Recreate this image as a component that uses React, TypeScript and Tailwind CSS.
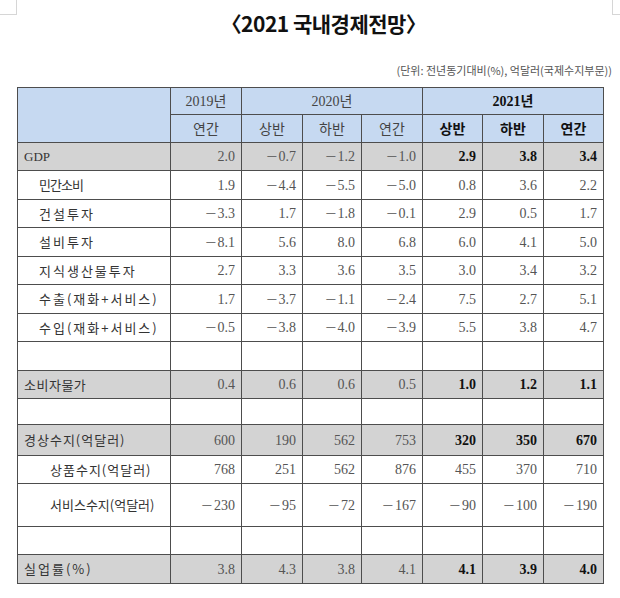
import React from "react";

type Row = {
  label: string;
  indent: 0 | 1 | 2;
  vals: string[];
  shade: boolean;
  track: string;
  serif?: boolean;
  empty?: boolean;
};

const rows: Row[] = [
  { label: "GDP", indent: 0, vals: ["2.0", "−0.7", "−1.2", "−1.0", "2.9", "3.8", "3.4"], shade: true, track: "tracking-[0px]", serif: true },
  { label: "민간소비", indent: 1, vals: ["1.9", "−4.4", "−5.5", "−5.0", "0.8", "3.6", "2.2"], shade: false, track: "tracking-[-1px]" },
  { label: "건설투자", indent: 1, vals: ["−3.3", "1.7", "−1.8", "−0.1", "2.9", "0.5", "1.7"], shade: false, track: "tracking-[2px]" },
  { label: "설비투자", indent: 1, vals: ["−8.1", "5.6", "8.0", "6.8", "6.0", "4.1", "5.0"], shade: false, track: "tracking-[2px]" },
  { label: "지식생산물투자", indent: 1, vals: ["2.7", "3.3", "3.6", "3.5", "3.0", "3.4", "3.2"], shade: false, track: "tracking-[2px]" },
  { label: "수출(재화+서비스)", indent: 1, vals: ["1.7", "−3.7", "−1.1", "−2.4", "7.5", "2.7", "5.1"], shade: false, track: "tracking-[2px]" },
  { label: "수입(재화+서비스)", indent: 1, vals: ["−0.5", "−3.8", "−4.0", "−3.9", "5.5", "3.8", "4.7"], shade: false, track: "tracking-[2px]" },
  { label: "", indent: 0, vals: ["", "", "", "", "", "", ""], shade: false, track: "", empty: true },
  { label: "소비자물가", indent: 0, vals: ["0.4", "0.6", "0.6", "0.5", "1.0", "1.2", "1.1"], shade: true, track: "tracking-[0.5px]" },
  { label: "", indent: 0, vals: ["", "", "", "", "", "", ""], shade: false, track: "", empty: true },
  { label: "경상수지(억달러)", indent: 0, vals: ["600", "190", "562", "753", "320", "350", "670"], shade: true, track: "tracking-[1px]" },
  { label: "상품수지(억달러)", indent: 2, vals: ["768", "251", "562", "876", "455", "370", "710"], shade: false, track: "tracking-[1px]" },
  { label: "서비스수지(억달러)", indent: 2, vals: ["−230", "−95", "−72", "−167", "−90", "−100", "−190"], shade: false, track: "tracking-[0px]" },
  { label: "", indent: 0, vals: ["", "", "", "", "", "", ""], shade: false, track: "", empty: true },
  { label: "실업률(%)", indent: 0, vals: ["3.8", "4.3", "3.8", "4.1", "4.1", "3.9", "4.0"], shade: true, track: "tracking-[2px]" },
];

const serif = "font-['Liberation_Serif','Noto_Sans_CJK_KR',serif]";
const sans = "font-['Noto_Sans_CJK_KR','Noto_Sans',sans-serif]";

function Num({ v }: { v: string }) {
  if (v.startsWith("−")) {
    return (
      <span>
        <span className="inline-block scale-x-[1.4] mr-[3px]">−</span>
        {v.slice(1)}
      </span>
    );
  }
  return <span>{v}</span>;
}

export default function App() {
  const blue = "bg-[#c6d9f1]";
  return (
    <div className="w-[620px] h-[598px] bg-white overflow-hidden">
      <div className="flex items-start h-[62px]">
        <div className="w-[17px] h-[15px] border-r border-b border-[#d6d6d6] shrink-0" />
        <div className="flex-1 flex justify-center pt-[10px] pl-[18px]">
          <div className={`${sans} text-[21px] leading-[26px] font-bold text-[#111] tracking-[-0.5px]`}>
            〈2021 국내경제전망〉
          </div>
        </div>
        <div className="w-[8px] h-[15px] border-l border-b border-[#d6d6d6] shrink-0" />
      </div>
      <div className={`${sans} text-right pr-[8px] text-[11px] leading-[16px] text-[#555]`}>
        (단위: 전년동기대비(%), 억달러(국제수지부문))
      </div>
      <div className="pl-[17px] mt-[9px]">
        <div className="inline-grid bg-[#4d4d4d] gap-px border border-[#4d4d4d] grid-cols-[152px_70px_60px_58px_60px_59px_60px_59px] grid-rows-[26px_27px_27px_28px_27px_28px_27px_28px_27px_28px_27px_25px_30px_27px_42px_27px_28px]">
          <div className={`${blue} row-span-2`} />
          <div className={`${blue} ${serif} flex items-center justify-center text-[14px] text-[#444]`}>2019년</div>
          <div className={`${blue} ${serif} col-span-3 flex items-center justify-center text-[14px] text-[#444]`}>2020년</div>
          <div className={`${blue} ${serif} col-span-3 flex items-center justify-center text-[14px] font-bold text-[#111]`}>2021년</div>
          {["연간", "상반", "하반", "연간"].map((h, i) => (
            <div key={"h" + i} className={`${blue} ${sans} flex items-center justify-center text-[14px] text-[#444]`}>
              {h}
            </div>
          ))}
          {["상반", "하반", "연간"].map((h, i) => (
            <div key={"b" + i} className={`${blue} ${sans} flex items-center justify-center text-[14px] font-bold text-[#111]`}>
              {h}
            </div>
          ))}
          {rows.map((r, ri) => {
            const bg = r.shade ? "bg-[#d3d3d3]" : "bg-white";
            const pad = r.indent === 0 ? "pl-[6px]" : r.indent === 1 ? "pl-[21px]" : "pl-[32px]";
            return (
              <React.Fragment key={ri}>
                <div
                  className={`${bg} ${pad} ${r.serif ? serif : sans} ${r.track} flex items-center text-[13px] text-[#333] whitespace-nowrap`}
                >
                  {r.label}
                </div>
                {r.vals.map((v, vi) => {
                  const bold = r.shade && vi >= 4;
                  return (
                    <div
                      key={vi}
                      className={`${bg} ${serif} flex items-center justify-end pr-[6px] text-[14px] ${
                        bold ? "font-bold text-[#111]" : "text-[#555]"
                      }`}
                    >
                      {v ? <Num v={v} /> : null}
                    </div>
                  );
                })}
              </React.Fragment>
            );
          })}
        </div>
      </div>
    </div>
  );
}
